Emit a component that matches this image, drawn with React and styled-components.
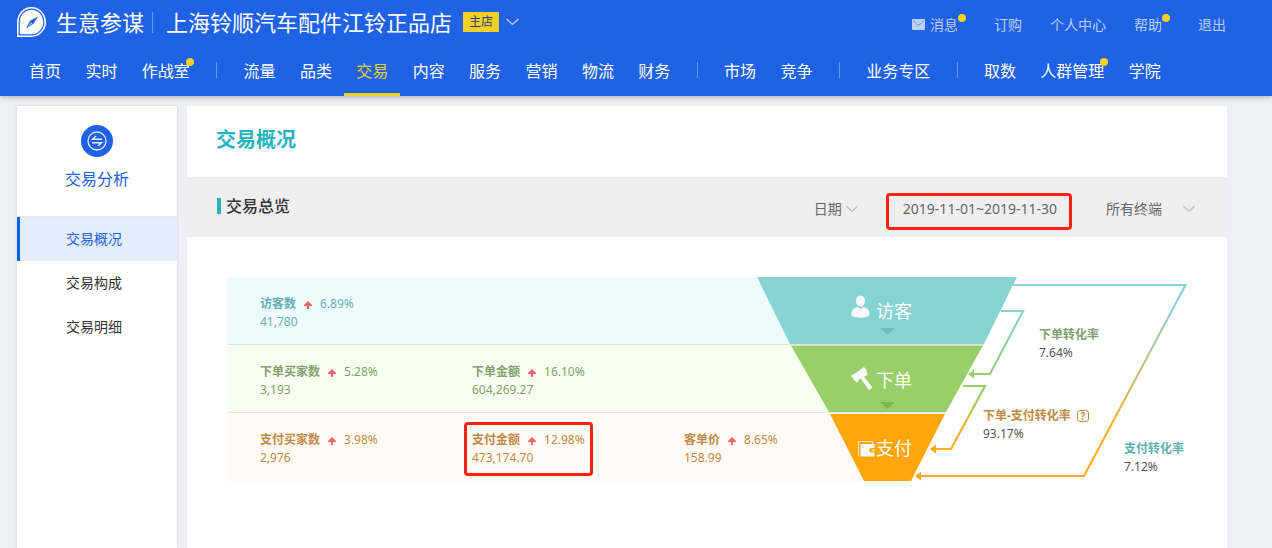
import React, { useState } from "react";
import styled, { createGlobalStyle } from "styled-components";

const GlobalStyle = createGlobalStyle`
  * {
    box-sizing: border-box;
  }
  body {
    margin: 0;
    background: #edf1f7;
    color: #333;
    font-family: "Noto Sans", "Noto Sans CJK SC", sans-serif;
    font-size: 14px;
  }
  a {
    color: inherit;
    text-decoration: none;
  }
  button, select {
    font: inherit;
    color: inherit;
    background: none;
    border: 0;
    padding: 0;
    margin: 0;
    cursor: pointer;
  }
  h1, h2, ul, dl, dd, dt {
    margin: 0;
    padding: 0;
  }
`;

const Header = styled.header`
  position: relative;
  height: 96px;
  padding: 0 46px 0 17px;
  background: #2062e6;
  color: #fff;
  box-shadow: 0 1px 5px rgba(0, 0, 0, 0.3);
`;

const TopRow = styled.div`
  display: flex;
  justify-content: space-between;
  height: 44px;
`;

const Brand = styled.div`
  display: flex;
  align-items: center;
  font-size: 22px;
  line-height: 44px;
  white-space: nowrap;
`;

const BrandName = styled.a`
  display: flex;
  align-items: center;
  gap: 10px;
`;

const BrandDivider = styled.span`
  width: 1px;
  height: 21px;
  margin: 0 13px 0 8px;
  background: #6c98ef;
`;

const ShopTag = styled.span`
  width: 36px;
  height: 20px;
  margin-left: 11px;
  background: #f3d024;
  color: #23417f;
  font-size: 12px;
  line-height: 20px;
  text-align: center;
`;

const ShopToggle = styled.button`
  display: flex;
  margin-left: 7px;
  color: #b9cdf7;
`;

const Utilities = styled.div`
  display: flex;
  gap: 28px;
  padding-top: 14px;
  white-space: nowrap;
`;

const UtilityLink = styled.a`
  display: flex;
  align-items: flex-start;
  color: #bccff7;
  line-height: 22px;

  svg {
    margin: 5px 5px 0 0;
  }
`;

const Dot = styled.i`
  width: 8px;
  height: 8px;
  border-radius: 50%;
  background: #f3d024;
`;

const Nav = styled.nav`
  display: flex;
  justify-content: space-between;
  align-items: center;
  max-width: 1156px;
`;

const NavLink = styled.a`
  position: relative;
  height: 52px;
  padding: 2px 12px 0;
  font-size: 16px;
  line-height: 50px;
  white-space: nowrap;
  color: ${(props) => (props.$active ? "#f3d024" : "#fff")};
  box-shadow: ${(props) => (props.$active ? "inset 0 -3px #f3d024" : "none")};

  ${Dot} {
    position: absolute;
    top: 14px;
    right: 8px;
  }
`;

const NavDivider = styled.span`
  width: 1px;
  height: 16px;
  margin: 0 14px;
  background: #6c98ef;
`;

const Page = styled.div`
  display: flex;
  gap: 10px;
  min-height: calc(100vh - 96px);
  padding: 10px 45px 0 17px;
`;

const Sidebar = styled.aside`
  flex: 0 0 160px;
  background: #fff;
  box-shadow: 0 0 3px rgba(0, 0, 0, 0.12);
`;

const SidebarHead = styled.div`
  display: flex;
  flex-direction: column;
  align-items: center;
  gap: 10px;
  height: 111px;
  padding-top: 19px;
  border-bottom: 1px solid #e8e8e8;
  color: #2062e6;
  font-size: 16px;
  line-height: 24px;
`;

const SidebarLink = styled.a`
  display: block;
  height: 44px;
  padding-left: 46px;
  border-left: 3px solid ${(props) => (props.$active ? "#0063e5" : "#fff")};
  background: ${(props) => (props.$active ? "#e3edfc" : "#fff")};
  color: ${(props) => (props.$active ? "#2062e6" : "#333")};
  line-height: 44px;
`;

const Main = styled.main`
  flex: 1;
  min-width: 0;
  background: #fff;
`;

const PageTitle = styled.h1`
  height: 71px;
  padding-left: 29px;
  color: #25b4bd;
  font-size: 20px;
  font-weight: 700;
  line-height: 68px;
`;

const Toolbar = styled.div`
  display: flex;
  align-items: flex-start;
  height: 60px;
  padding: 16px 32px 0 30px;
  background: #efefef;
  color: #666;
  white-space: nowrap;
`;

const SectionTitle = styled.h2`
  display: flex;
  align-items: center;
  gap: 5px;
  margin-right: auto;
  color: #333;
  font-size: 16px;
  font-weight: 500;
  line-height: 26px;

  &::before {
    content: "";
    width: 4px;
    height: 16px;
    background: #25b4bd;
  }
`;

const Picker = styled.label`
  display: flex;
  align-items: center;
  gap: ${(props) => props.$gap}px;
  height: 32px;
  color: #bbb;

  select {
    appearance: none;
    outline: none;
    color: #666;
    line-height: 20px;
  }
`;

const DateRange = styled.button`
  height: 37px;
  margin: 0 34px 0 28px;
  padding: 0 12px 6px 14px;
  border: 3px solid #ff2011;
  border-radius: 4px;
`;

const Overview = styled.section`
  display: flex;
  padding: 40px;
`;

const StatRows = styled.div`
  position: relative;
  z-index: 1;
  flex: 1;
`;

const StatRow = styled.dl`
  display: grid;
  grid-template-columns: repeat(3, 212px);
  width: 0;
  min-width: 100%;
  height: 68px;
  padding: 18px 0 0 33px;
  background: ${(props) => props.$tint};
  color: ${(props) => props.$color};
  border-bottom: ${(props) => (props.$last ? "0" : "1px solid #e3e3e3")};
  font-size: 12px;
  line-height: 18px;
`;

const Stat = styled.div`
  position: relative;
  justify-self: start;
  height: 36px;
  white-space: nowrap;

  &::after {
    content: "";
    display: ${(props) => (props.$marked ? "block" : "none")};
    position: absolute;
    inset: -9px -8px -9px -8px;
    border: 3px solid #ff2011;
    border-radius: 4px;
  }
`;

const StatHead = styled.dt`
  display: flex;
  align-items: center;

  svg {
    margin: 2px 8px 0;
  }
`;

const Funnel = styled.div`
  position: relative;
  flex: 0 0 430px;
  height: 204px;
`;

const FunnelArt = styled.svg`
  display: block;
  width: 430px;
  height: 204px;
`;

const Stage = styled.span`
  position: absolute;
  left: 119px;
  top: ${(props) => props.$top}px;
  color: #fff;
  font-size: 18px;
  line-height: 24px;
`;

const Rate = styled.dl`
  position: absolute;
  left: ${(props) => props.$left}px;
  top: ${(props) => props.$top}px;
  color: #555;
  font-size: 12px;
  line-height: 18px;
  white-space: nowrap;

  dt {
    display: flex;
    align-items: center;
    gap: 6px;
    color: ${(props) => props.$color};
    font-weight: 700;
  }
`;

const HelpButton = styled.button`
  width: 12px;
  height: 12px;
  border: 1px solid #c08a45;
  border-radius: 3px;
  color: #c08a45;
  font-size: 10px;
  font-weight: 700;
  line-height: 10px;
`;

const Chevron = ({ width = 12 }) => (
  <svg width={width} height="8" viewBox="0 0 12 8" fill="none" preserveAspectRatio="none">
    <path d="M0.5 1L6 6.5L11.5 1" stroke="currentColor" strokeWidth="1.2" />
  </svg>
);

const Logo = () => (
  <svg width="29" height="30" viewBox="0 0 29 30">
    <path d="M0 30V15A14.5 15 0 1 1 14.5 30Z" fill="#fff" />
    <path
      d="M2.2 27.8V15A12.3 12.8 0 1 1 14.5 27.8Z"
      fill="none"
      stroke="#2062e6"
      strokeWidth="1.2"
    />
    <path d="M21 9.5L16.5 16.8L9 21.5L13 13.8Z" fill="#2062e6" />
    <path d="M14 15L15.5 16.5L11 19.5Z" fill="#9dbcf5" />
  </svg>
);

const MailIcon = () => (
  <svg width="13" height="11" viewBox="0 0 13 11">
    <rect width="13" height="11" rx="1" fill="#bccff7" />
    <path d="M1 1.5L6.5 6.5L12 1.5" fill="none" stroke="#6f99ee" />
  </svg>
);

const TradeIcon = () => (
  <svg width="32" height="32" viewBox="0 0 32 32" fill="none" stroke="#e6eefc">
    <circle cx="16" cy="16" r="16" fill="#2062e6" stroke="none" />
    <circle cx="16" cy="16" r="9" strokeWidth="1.3" />
    <path d="M21 14.3H11.5L15 11M11 17.7H20.500L17 21" strokeWidth="1.4" />
  </svg>
);

const UpArrow = () => (
  <svg width="8" height="8" viewBox="0 0 8 8">
    <path d="M4 0L8 4V5H5V8H3V5H0V4Z" fill="#ff6363" />
  </svg>
);

const navGroups = [
  [{ name: "首页" }, { name: "实时" }, { name: "作战室", dot: true }],
  [
    { name: "流量" },
    { name: "品类" },
    { name: "交易", active: true },
    { name: "内容" },
    { name: "服务" },
    { name: "营销" },
    { name: "物流" },
    { name: "财务" },
  ],
  [{ name: "市场" }, { name: "竞争" }],
  [{ name: "业务专区" }],
  [{ name: "取数" }, { name: "人群管理", dot: true }, { name: "学院" }],
];

const utilities = [
  { name: "消息", icon: true, dot: true },
  { name: "订购" },
  { name: "个人中心" },
  { name: "帮助", dot: true },
  { name: "退出" },
];

const statRows = [
  {
    tint: "#eefafb",
    color: "#66b1b1",
    stats: [{ label: "访客数", change: "6.89%", value: "41,780" }],
  },
  {
    tint: "#f7fff0",
    color: "#839f6d",
    stats: [
      { label: "下单买家数", change: "5.28%", value: "3,193" },
      { label: "下单金额", change: "16.10%", value: "604,269.27" },
    ],
  },
  {
    tint: "#fffaf4",
    color: "#c08a45",
    stats: [
      { label: "支付买家数", change: "3.98%", value: "2,976" },
      { label: "支付金额", change: "12.98%", value: "473,174.70", marked: true },
      { label: "客单价", change: "8.65%", value: "158.99" },
    ],
  },
];

const FunnelDrawing = () => (
  <FunnelArt viewBox="0 0 430 204" aria-hidden="true">
    <defs>
      <linearGradient id="all" gradientUnits="userSpaceOnUse" x1="0" y1="8" x2="0" y2="199">
        <stop offset="0.1" stopColor="#87d3d3" />
        <stop offset="0.8" stopColor="#ffad20" />
      </linearGradient>
      <linearGradient id="order" gradientUnits="userSpaceOnUse" x1="0" y1="34" x2="0" y2="97">
        <stop offset="0.1" stopColor="#87d3d3" />
        <stop offset="1" stopColor="#99cf69" />
      </linearGradient>
      <linearGradient id="pay" gradientUnits="userSpaceOnUse" x1="0" y1="109" x2="0" y2="172">
        <stop offset="0.1" stopColor="#99cf69" />
        <stop offset="0.8" stopColor="#ffad20" />
      </linearGradient>
    </defs>

    {/* row tints running up to the slanted edge */}
    <path d="M0 0L34 67H0Z" fill="#eefafb" />
    <path d="M0 68H35L73 135H0Z" fill="#f7fff0" />
    <path d="M0 136H73L108 204H0Z" fill="#fffaf4" />
    <path d="M0 67H227V68H0ZM0 135H189V136H0Z" fill="#e3e3e3" />

    <path d="M0 0H260L227 67H33Z" fill="#87d3d3" />
    <path d="M34 68.5H226L189 135H72Z" fill="#99cf69" />
    <path d="M73 137H188L154 204H107Z" fill="#ffa60d" />
    <path d="M123 51H138L130.5 58Z" fill="#66c0c0" />
    <path d="M123 125H138L130.5 132Z" fill="#76b84a" />

    <g fill="none" strokeWidth="2.2">
      <path d="M256 8H428.5L327 199H163" stroke="url(#all)" />
      <path d="M244 34H266L233 97H216" stroke="url(#order)" />
      <path d="M206 109H228L194 172H178" stroke="url(#pay)" />
    </g>
    <path d="M158 199L164 194.5V203.5Z" fill="#ffa60d" />
    <path d="M211 97L217 92.5V101.5Z" fill="#99cf69" />
    <path d="M173 172L179 167.5V176.5Z" fill="#ffa60d" />

    {/* visitor */}
    <g fill="#f9f9f9">
      <ellipse cx="103.500" cy="24" rx="4.5" ry="5.5" />
      <path d="M94.300 38C94 33 97 31 100.5 30L103.5 32L106.5 30C110 31 113 33 112.5 38C112 41.5 95 41.5 94.3 38Z" />
    </g>
    {/* gavel */}
    <g fill="#f9f9f9">
      <path d="M94 98.5L98 96.5L103.5 92.500L107 90L109.500 93L110.500 98L107.5 99.5L101.5 103L100.500 106L97 103Z" />
      <path d="M103.500 101.500L107 99.5L115.500 110.500L112 113Z" />
    </g>
    {/* wallet */}
    <path d="M101.5 179V164.5H115.5V167" fill="none" stroke="#ffe3b5" strokeWidth="1.2" />
    <path d="M103.5 167H117.500V171H114.500A2 2 0 0 0 114.500 175.500H117.500V179.500H103.500Z" fill="#f9f9f9" />
    <circle cx="116.200" cy="173.200" r="1.8" fill="#ffc870" />
  </FunnelArt>
);

const App = () => {
  const [period, setPeriod] = useState("日期");
  const [device, setDevice] = useState("所有终端");

  return (
    <>
      <GlobalStyle />
      <Header>
        <TopRow>
          <Brand>
            <BrandName href="#home">
              <Logo />
              生意参谋
            </BrandName>
            <BrandDivider />
            上海铃顺汽车配件江铃正品店
            <ShopTag>主店</ShopTag>
            <ShopToggle aria-label="切换店铺">
              <Chevron width={13} />
            </ShopToggle>
          </Brand>
          <Utilities>
            {utilities.map((item) => (
              <UtilityLink href="#" key={item.name}>
                {item.icon && <MailIcon />}
                {item.name}
                {item.dot && <Dot />}
              </UtilityLink>
            ))}
          </Utilities>
        </TopRow>
        <Nav>
          {navGroups.map((group, index) => (
            <React.Fragment key={index}>
              {index > 0 && <NavDivider />}
              {group.map((item) => (
                <NavLink href="#" key={item.name} $active={item.active}>
                  {item.name}
                  {item.dot && <Dot />}
                </NavLink>
              ))}
            </React.Fragment>
          ))}
        </Nav>
      </Header>

      <Page>
        <Sidebar>
          <SidebarHead>
            <TradeIcon />
            交易分析
          </SidebarHead>
          <SidebarLink href="#" $active>
            交易概况
          </SidebarLink>
          <SidebarLink href="#">交易构成</SidebarLink>
          <SidebarLink href="#">交易明细</SidebarLink>
        </Sidebar>

        <Main>
          <PageTitle>交易概况</PageTitle>
          <Toolbar>
            <SectionTitle>交易总览</SectionTitle>
            <Picker $gap={4}>
              <select
                aria-label="日期"
                value={period}
                onChange={(e) => setPeriod(e.target.value)}
              >
                <option>日期</option>
              </select>
              <Chevron />
            </Picker>
            <DateRange>2019-11-01~2019-11-30</DateRange>
            <Picker $gap={21}>
              <select
                aria-label="终端"
                value={device}
                onChange={(e) => setDevice(e.target.value)}
              >
                <option>所有终端</option>
              </select>
              <Chevron />
            </Picker>
          </Toolbar>

          <Overview>
            <StatRows>
              {statRows.map((row, index) => (
                <StatRow
                  key={row.tint}
                  $tint={row.tint}
                  $color={row.color}
                  $last={index === statRows.length - 1}
                >
                  {row.stats.map((stat) => (
                    <Stat key={stat.label} $marked={stat.marked}>
                      <StatHead>
                        <b>{stat.label}</b>
                        <UpArrow />
                        {stat.change}
                      </StatHead>
                      <dd>{stat.value}</dd>
                    </Stat>
                  ))}
                </StatRow>
              ))}
            </StatRows>
            <Funnel>
              <FunnelDrawing />
              <Stage $top={22}>访客</Stage>
              <Stage $top={91}>下单</Stage>
              <Stage $top={159}>支付</Stage>
              <Rate $left={282} $top={49} $color="#7f9f6b">
                <dt>下单转化率</dt>
                <dd>7.64%</dd>
              </Rate>
              <Rate $left={226} $top={130} $color="#c08a45">
                <dt>
                  下单-支付转化率
                  <HelpButton aria-label="说明">?</HelpButton>
                </dt>
                <dd>93.17%</dd>
              </Rate>
              <Rate $left={367} $top={163} $color="#5fb0b0">
                <dt>支付转化率</dt>
                <dd>7.12%</dd>
              </Rate>
            </Funnel>
          </Overview>
        </Main>
      </Page>
    </>
  );
};

export default App;
